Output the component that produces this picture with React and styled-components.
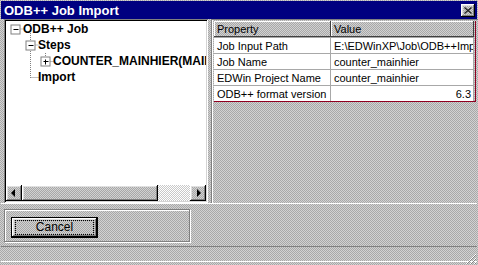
import React from "react";
import styled, { createGlobalStyle } from "styled-components";

const GlobalStyle = createGlobalStyle`
  html, body { margin: 0; padding: 0; }
  body {
    width: 478px;
    height: 265px;
    overflow: hidden;
    font-family: "Liberation Sans", Arial, sans-serif;
  }
`;

const dither = `repeating-conic-gradient(#d2d2d2 0 25%, #a8a8a8 0 50%) 0 0 / 2px 2px`;
const lightDither = `repeating-conic-gradient(#ffffff 0 25%, #c8c8c8 0 50%) 0 0 / 2px 2px`;
const raised = `inset -1px -1px #000, inset 1px 1px #fff, inset -2px -2px #808080, inset 2px 2px #dfdfdf`;
const sunken = `inset 1px 1px #808080, inset -1px -1px #fff, inset 2px 2px #000, inset -2px -2px #d4d4d4`;

const Window = styled.div`
  width: 478px;
  height: 265px;
  box-sizing: border-box;
  padding: 1px 1px 0;
  background: ${dither};
  display: flex;
  flex-direction: column;
`;

const TitleBar = styled.div`
  height: 18px;
  flex: none;
  background: #000080;
  color: #fff;
  font-weight: bold;
  font-size: 13px;
  display: flex;
  align-items: center;
  justify-content: space-between;
  padding: 0 2px 0 3px;
`;

const CloseBtn = styled.div`
  width: 14px;
  height: 13px;
  background: ${dither};
  box-shadow: ${raised};
  display: flex;
  align-items: center;
  justify-content: center;
`;

const Main = styled.div`
  height: 184px;
  flex: none;
  display: flex;
  gap: 3px;
  margin: 0 1px 0 3px;
`;

const TreePane = styled.div`
  width: 204px;
  flex: none;
  box-sizing: border-box;
  padding: 2px;
  background: #fff;
  box-shadow: ${sunken};
  display: flex;
  flex-direction: column;
`;

const TreeBody = styled.div`
  flex: 1;
  position: relative;
  overflow: hidden;
`;

const TreeLines = styled.svg`
  position: absolute;
  left: 0;
  top: 0;
`;

const TreeRow = styled.div`
  height: 16px;
  line-height: 16px;
  padding-left: ${(p) => 17 + p.$level * 15}px;
  font-size: 12px;
  font-weight: bold;
  white-space: nowrap;
  color: #000;
  position: relative;
`;

const HScroll = styled.div`
  height: 16px;
  flex: none;
  display: flex;
  background: ${lightDither};
`;

const ArrowBtn = styled.div`
  width: 16px;
  height: 16px;
  flex: none;
  background: ${dither};
  box-shadow: ${raised};
  display: flex;
  align-items: center;
  justify-content: center;
`;

const Thumb = styled.div`
  width: 136px;
  height: 16px;
  background: ${dither};
  box-shadow: ${raised};
`;

const Track = styled.div`
  flex: 1;
`;

const RightPane = styled.div`
  flex: 1;
  box-sizing: border-box;
  padding: 2px;
  box-shadow: inset 1px 1px #808080, inset 2px 0 #fff;
`;

const Grid = styled.div`
  display: grid;
  grid-template-columns: 117px 143px;
  width: 261px;
  border-right: 1px solid #900020;
  border-bottom: 1px solid #900020;
  font-size: 11px;
  margin-left: 1px;
`;

const HeadCell = styled.div`
  height: 16px;
  line-height: 16px;
  padding-left: 3px;
  background: ${dither};
  box-shadow: inset -1px -1px #404040, inset 1px 1px #fff;
  color: #000;
`;

const Cell = styled.div`
  height: 16px;
  line-height: 16px;
  box-sizing: border-box;
  padding: 0 2px 0 3px;
  background: #fff;
  border-right: 1px solid #a8a8a8;
  border-top: 1px solid #a8a8a8;
  white-space: nowrap;
  overflow: hidden;
  text-align: ${(p) => (p.$right ? "right" : "left")};
  color: #000;
`;

const Divider = styled.div`
  height: 1px;
  flex: none;
  background: #fff;
`;

const Bottom = styled.div`
  height: 42px;
  flex: none;
  padding: 5px 0 0 3px;
  box-sizing: border-box;
`;

const GroupBox = styled.div`
  width: 186px;
  height: 33px;
  box-sizing: border-box;
  border: 1px solid #808080;
  box-shadow: inset 1px 1px #fff, 1px 1px #fff;
  padding: 7px 0 0 6px;
`;

const Button = styled.div`
  width: 87px;
  height: 21px;
  box-sizing: border-box;
  border: 1px solid #000;
  background: ${dither};
  box-shadow: ${raised};
  padding: 2px 3px;
  font-size: 12px;
  color: #000;
`;

const Focus = styled.div`
  height: 15px;
  box-sizing: border-box;
  border: 1px dotted #000;
  text-align: center;
  line-height: 13px;
`;

const StatusBar = styled.div`
  flex: 1;
  border-top: 1px solid #808080;
  position: relative;
`;

const StatusLine = styled.div`
  margin-top: 14px;
  height: 1px;
  background: #fff;
`;

const Grip = styled.svg`
  position: absolute;
  right: 0;
  bottom: 0;
`;

const rows = [
  ["Job Input Path", "E:\\EDWinXP\\Job\\ODB++Import\\counter"],
  ["Job Name", "counter_mainhier"],
  ["EDWin Project Name", "counter_mainhier"],
  ["ODB++ format version", "6.3"],
];

const Box = ({ x, y, plus }) => (
  <g>
    <rect x={x - 4.5} y={y - 4.5} width="9" height="9" fill="#fff" stroke="#808080" />
    <line x1={x - 2} y1={y} x2={x + 3} y2={y} stroke="#000" />
    {plus && <line x1={x} y1={y - 2} x2={x} y2={y + 3} stroke="#000" />}
  </g>
);

const dots = { stroke: "#808080", strokeDasharray: "1 1" };

export default function App() {
  return (
    <>
      <GlobalStyle />
      <Window>
        <TitleBar>
          <span>ODB++ Job Import</span>
          <CloseBtn>
            <svg width="8" height="7">
              <path d="M0.5 0.5 L7.5 6.5 M7.5 0.5 L0.5 6.5" stroke="#202020" strokeWidth="1.3" />
            </svg>
          </CloseBtn>
        </TitleBar>
        <Main>
          <TreePane>
            <TreeBody>
              <TreeLines width="200" height="90">
                <line x1="13.5" y1="8" x2="19" y2="8" {...dots} />
                <line x1="24.5" y1="12" x2="24.5" y2="57" {...dots} />
                <line x1="24.5" y1="24" x2="34" y2="24" {...dots} />
                <line x1="24.5" y1="56.5" x2="34" y2="56.5" {...dots} />
                <line x1="39.5" y1="32" x2="39.5" y2="40" {...dots} />
                <line x1="39.5" y1="40.5" x2="49" y2="40.5" {...dots} />
                <Box x={9.5} y={8.5} />
                <Box x={24.5} y={24.5} />
                <Box x={39.5} y={40.5} plus />
              </TreeLines>
              <TreeRow $level={0}>ODB++ Job</TreeRow>
              <TreeRow $level={1}>Steps</TreeRow>
              <TreeRow $level={2}>COUNTER_MAINHIER(MAINHIER)</TreeRow>
              <TreeRow $level={1}>Import</TreeRow>
            </TreeBody>
            <HScroll>
              <ArrowBtn>
                <svg width="8" height="8">
                  <path d="M5 0 L1 4 L5 8 Z" fill="#000" />
                </svg>
              </ArrowBtn>
              <Thumb />
              <Track />
              <ArrowBtn>
                <svg width="8" height="8">
                  <path d="M3 0 L7 4 L3 8 Z" fill="#000" />
                </svg>
              </ArrowBtn>
            </HScroll>
          </TreePane>
          <RightPane>
            <Grid>
              <HeadCell>Property</HeadCell>
              <HeadCell>Value</HeadCell>
              {rows.map(([k, v]) => (
                <React.Fragment key={k}>
                  <Cell>{k}</Cell>
                  <Cell $right={v === "6.3"}>{v}</Cell>
                </React.Fragment>
              ))}
            </Grid>
          </RightPane>
        </Main>
        <Divider />
        <Bottom>
          <GroupBox>
            <Button>
              <Focus>Cancel</Focus>
            </Button>
          </GroupBox>
        </Bottom>
        <StatusBar>
          <StatusLine />
          <Grip width="12" height="12">
            <path d="M11 1 L1 11 M11 5 L5 11 M11 9 L9 11" stroke="#fff" />
            <path d="M11 2 L2 11 M11 6 L6 11 M11 10 L10 11" stroke="#808080" />
          </Grip>
        </StatusBar>
      </Window>
    </>
  );
}
